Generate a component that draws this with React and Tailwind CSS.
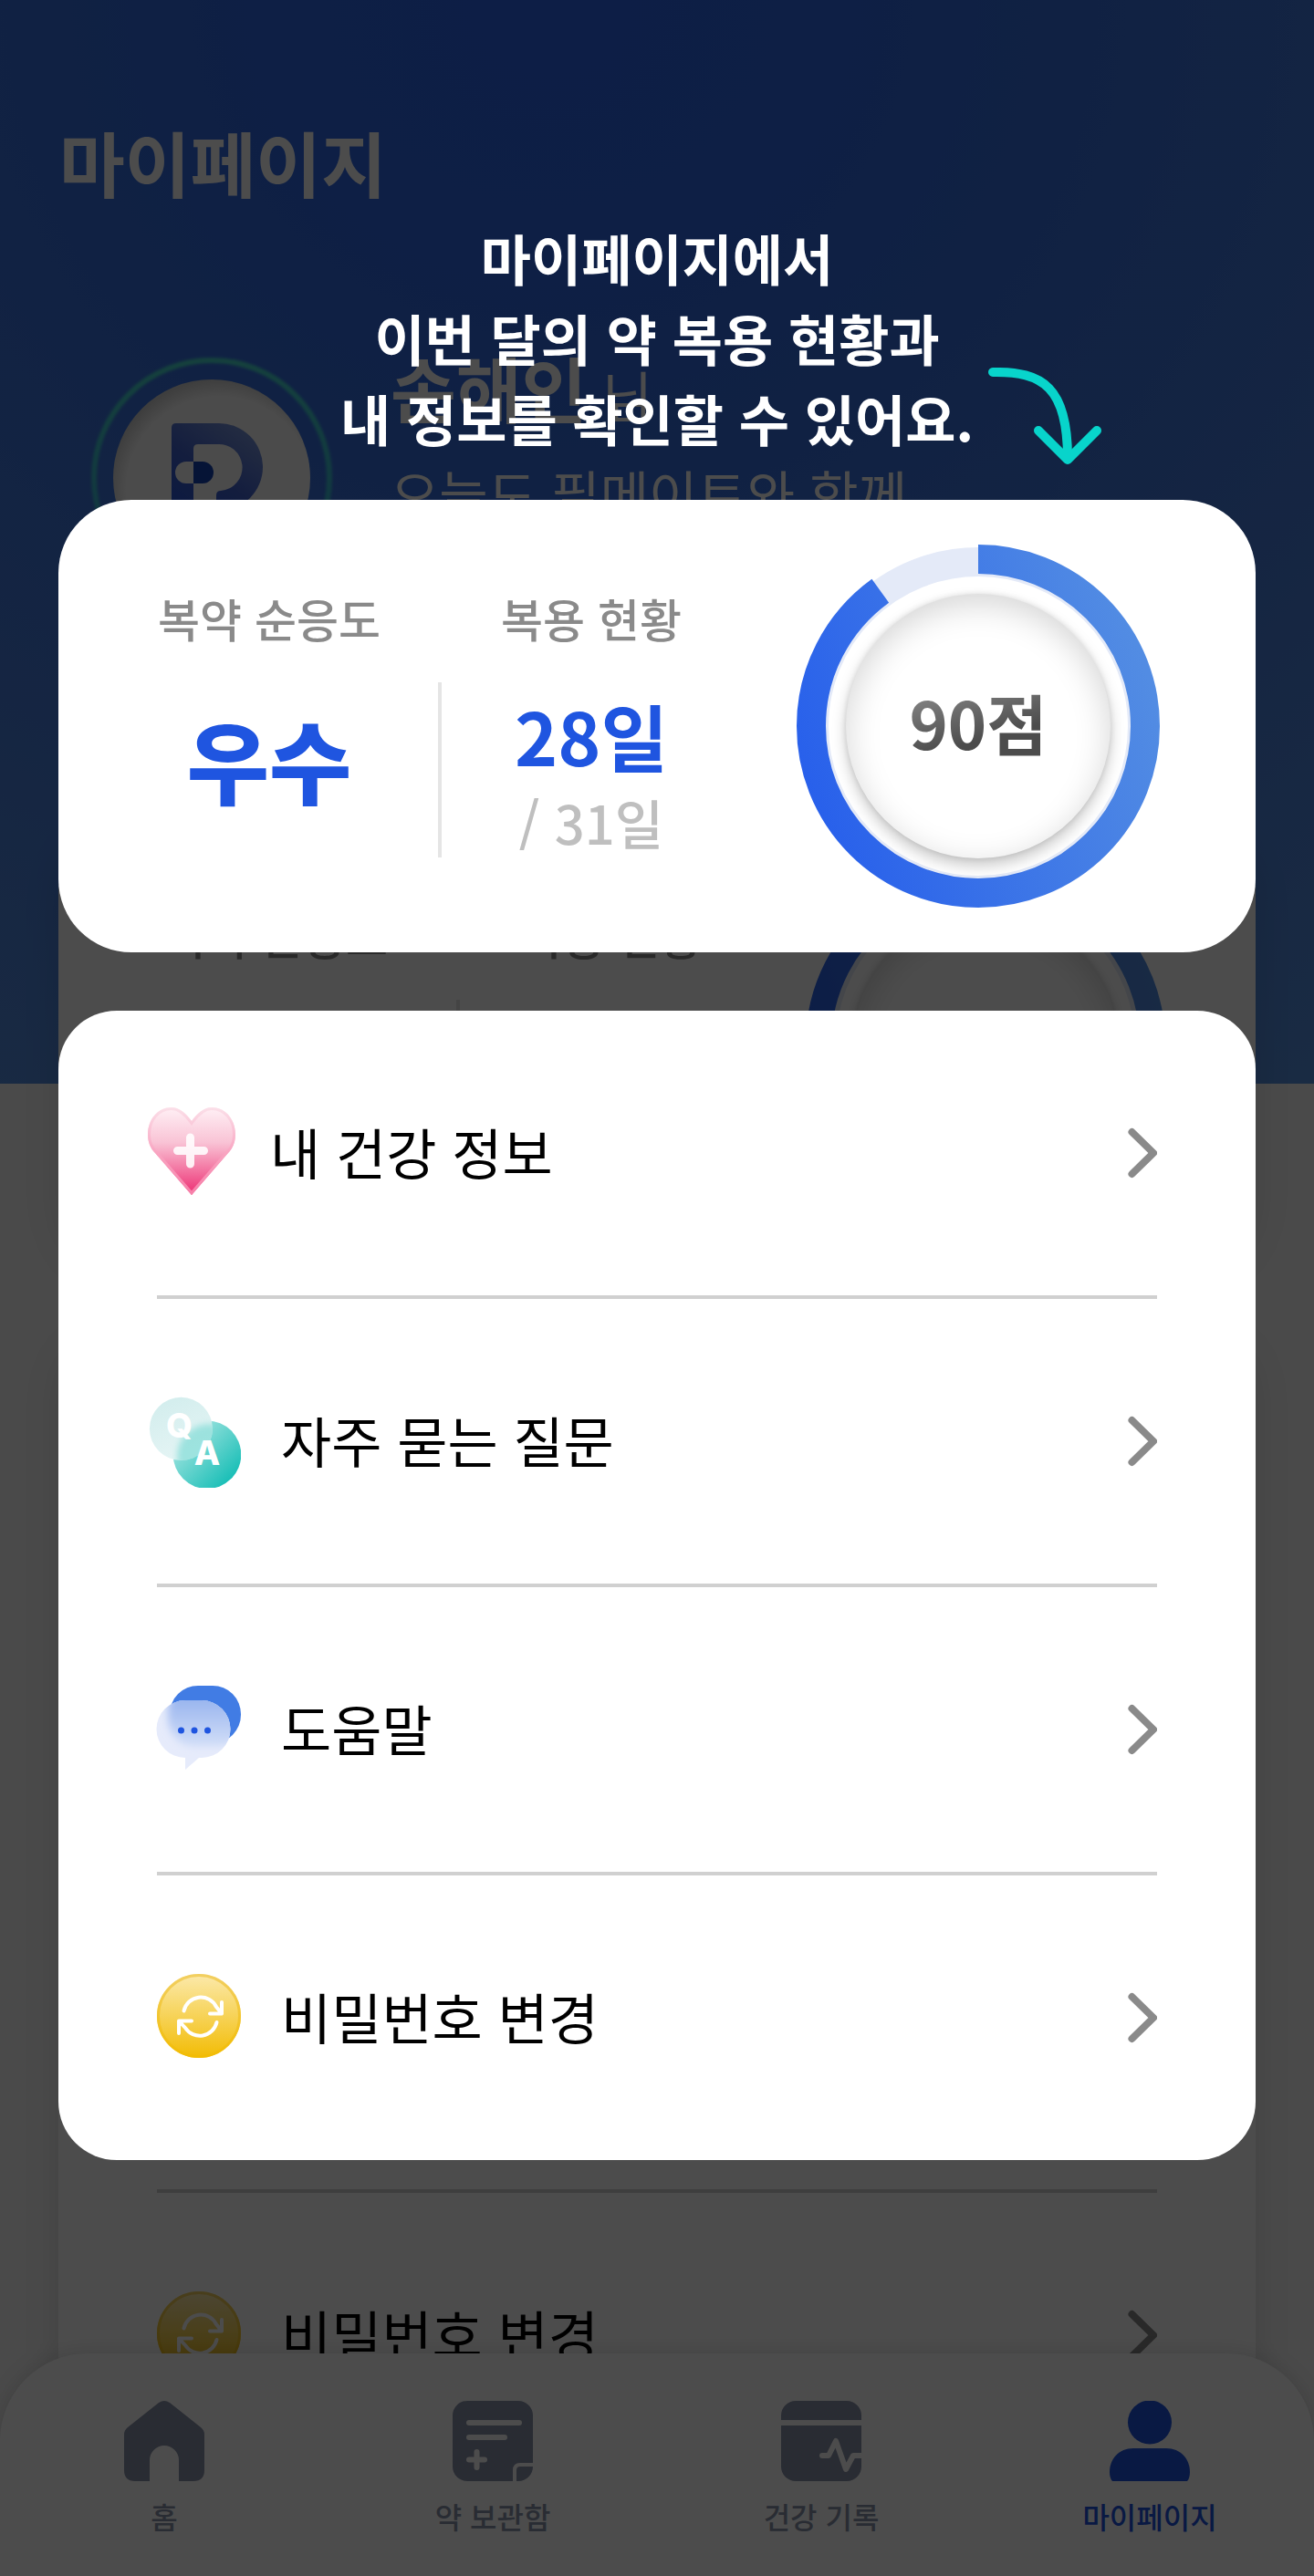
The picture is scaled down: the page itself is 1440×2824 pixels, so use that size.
import React from "react";

const TRACK = "#e4eaf8";

function ScoreRing({ progressWidth = 32, progressRadius = 183 }) {
  const id = React.useId();
  const length = 2 * Math.PI * progressRadius;
  return (
    <div className="relative grid size-[400px] shrink-0 place-items-center">
      <svg viewBox="0 0 400 400" className="absolute inset-0 size-full" aria-hidden="true">
        <defs>
          <linearGradient id={id + "g"} gradientUnits="userSpaceOnUse" x1="140" y1="10" x2="270" y2="380">
            <stop offset="0" stopColor="#2860eb" />
            <stop offset="1" stopColor="#528ce3" />
          </linearGradient>
        </defs>
        <circle cx="200" cy="200" r="180" fill="none" stroke={TRACK} strokeWidth="32" />
        <circle
          cx="200"
          cy="200"
          r={progressRadius}
          transform="rotate(-90 200 200)"
          fill="none"
          stroke={"url(#" + id + "g)"}
          strokeWidth={progressWidth}
          strokeDasharray={length * 0.9 + " " + length}
        />
      </svg>
      <div className="relative grid size-[290px] place-items-center rounded-full bg-white pb-[10px] shadow-[0_8px_16px_rgba(0,0,0,0.22),0_0_6px_rgba(0,0,0,0.10),inset_0_10px_36px_rgba(0,0,0,0.17)]">
        <strong className="bg-[linear-gradient(165deg,#808080_20%,#4c4c4c_65%)] bg-clip-text text-[72px] leading-[100px] font-bold text-transparent">
          90점
        </strong>
      </div>
    </div>
  );
}

function SummaryCard({ dimmed = false }) {
  return (
    <section
      className={
        "flex h-[496px] items-start rounded-[80px] bg-white " +
        (dimmed
          ? "pr-24 pl-[116px] shadow-[0_8px_40px_rgba(0,0,0,0.10)]"
          : "pr-[104px] pl-[108px]")
      }
    >
      <div className="flex w-[246px] flex-col items-center pt-[93px]">
        <h2 className="text-[50px] leading-[72px] font-medium whitespace-nowrap text-[#8a8a8a]">복약 순응도</h2>
        <p className="mt-[42px] text-[98px] leading-[152px] font-black whitespace-nowrap text-[#1f55e0]">우수</p>
      </div>
      <div
        className={
          "mt-[200px] h-48 w-1 shrink-0 bg-[#e5e5e5] " + (dimmed ? "mr-[66px] ml-[74px]" : "mr-16 ml-[62px]")
        }
      />
      <div className="flex w-[200px] flex-col items-center pt-[93px]">
        <h2 className="text-[50px] leading-[72px] font-medium whitespace-nowrap text-[#8a8a8a]">복용 현황</h2>
        <p className="mt-[42px] text-[80px] leading-[100px] font-bold whitespace-nowrap text-[#1f55e0]">28일</p>
        <p className="text-[58px] leading-[92px] font-medium whitespace-nowrap text-[#bfbfbf]">/ 31일</p>
      </div>
      <div className="ml-auto flex h-full items-center">
        {dimmed ? <ScoreRing progressWidth={28} /> : <ScoreRing />}
      </div>
    </section>
  );
}

function HeartIcon() {
  const id = React.useId();
  const d =
    "M48 15C42 7 35 0 26 0C11 0 0 13 0 30C0 38 3 45 8 50L48 96L88 50C93 45 96 38 96 30C96 13 85 0 70 0C61 0 54 7 48 15Z";
  return (
    <svg viewBox="0 0 90 90" className="size-[90px] shrink-0 overflow-visible" aria-hidden="true">
      <defs>
        <linearGradient id={id + "f"} x1="0" y1="0" x2="0" y2="1">
          <stop offset="0" stopColor="#fff0f5" />
          <stop offset="0.4" stopColor="#f9c3d5" />
          <stop offset="1" stopColor="#ed2d72" />
        </linearGradient>
        <linearGradient id={id + "s"} x1="0" y1="0" x2="0" y2="1">
          <stop offset="0" stopColor="#fbe0e9" />
          <stop offset="0.5" stopColor="#f9a6c2" />
          <stop offset="1" stopColor="#f77fa9" />
        </linearGradient>
        <clipPath id={id + "c"}>
          <path d={d} />
        </clipPath>
      </defs>
      <g transform="translate(0 -5)">
        <path d={d} fill={"url(#" + id + "f)"} />
        <path d={d} fill="none" stroke={"url(#" + id + "s)"} strokeWidth="6" clipPath={"url(#" + id + "c)"} />
        <path d="M46.5 33v29M32.500 47.500h29" stroke="#fff" strokeOpacity="0.88" strokeWidth="9" strokeLinecap="round" fill="none" />
      </g>
    </svg>
  );
}

function FaqIcon() {
  const id = React.useId();
  return (
    <svg viewBox="0 0 102 102" className="size-[102px] shrink-0" aria-hidden="true">
      <defs>
        <linearGradient id={id + "t"} x1="0.15" y1="0.15" x2="0.85" y2="0.85">
          <stop offset="0" stopColor="#a5e5e1" />
          <stop offset="1" stopColor="#1bbfb7" />
        </linearGradient>
        <linearGradient id={id + "l"} x1="0.2" y1="0" x2="0.6" y2="1">
          <stop offset="0" stopColor="#d2eded" />
          <stop offset="1" stopColor="#e6f5f5" />
        </linearGradient>
        <clipPath id={id + "c"}>
          <circle cx="36.400" cy="37.300" r="34.500" />
        </clipPath>
        <filter id={id + "b"} x="-20%" y="-20%" width="140%" height="140%">
          <feGaussianBlur stdDeviation="3.500" />
        </filter>
      </defs>
      <circle cx="65" cy="65.700" r="37.300" fill={"url(#" + id + "t)"} />
      <circle cx="36.400" cy="37.300" r="34.500" fill={"url(#" + id + "l)"} />
      <g clipPath={"url(#" + id + "c)"}>
        <circle cx="68" cy="68" r="36" fill="#7fdcd5" fillOpacity="0.7" filter={"url(#" + id + "b)"} />
      </g>
      <g fill="#fff" fontFamily="Inter, sans-serif" fontWeight="800" fontSize="37" textAnchor="middle">
        <text x="34.500" y="47">Q</text>
        <text x="65" y="77">A</text>
      </g>
    </svg>
  );
}

function HelpIcon() {
  const id = React.useId();
  const front = "M41 19H59A31.500 31.500 0 0 1 59 82H56L41 95V82A31.500 31.500 0 0 1 41 19Z";
  return (
    <svg viewBox="0 0 102 102" className="size-[102px] shrink-0" aria-hidden="true">
      <defs>
        <linearGradient id={id + "g"} x1="0" y1="0" x2="0" y2="1">
          <stop offset="0.2" stopColor="#95b2ee" />
          <stop offset="1" stopColor="#d3dff8" />
        </linearGradient>
        <clipPath id={id + "c"}>
          <path d={front} />
        </clipPath>
        <filter id={id + "b"} x="-20%" y="-20%" width="140%" height="140%">
          <feGaussianBlur stdDeviation="4" />
        </filter>
      </defs>
      <rect x="24" y="3" width="78" height="63" rx="31" fill="#417ce4" />
      <path d={front} fill="#e6ebfb" />
      <g clipPath={"url(#" + id + "c)"}>
        <rect x="22" y="0" width="84" height="70" rx="31" fill={"url(#" + id + "g)"} filter={"url(#" + id + "b)"} />
      </g>
      <g fill="#1f55e0">
        <circle cx="36.500" cy="52" r="3.500" />
        <circle cx="51" cy="52" r="3.500" />
        <circle cx="65.500" cy="52" r="3.500" />
      </g>
    </svg>
  );
}

function PasswordIcon() {
  const id = React.useId();
  return (
    <svg viewBox="0 0 102 102" className="size-[102px] shrink-0" aria-hidden="true">
      <defs>
        <linearGradient id={id + "f"} x1="0" y1="0" x2="0" y2="1">
          <stop offset="0.05" stopColor="#fbe7a3" />
          <stop offset="1" stopColor="#f2bc04" />
        </linearGradient>
        <linearGradient id={id + "s"} x1="0" y1="0" x2="0" y2="1">
          <stop offset="0" stopColor="#f2cf60" />
          <stop offset="1" stopColor="#f2bc04" />
        </linearGradient>
      </defs>
      <circle cx="56" cy="49" r="46" fill={"url(#" + id + "f)"} />
      <circle cx="56" cy="49" r="44.500" fill="none" stroke={"url(#" + id + "s)"} strokeWidth="3" />
      <g fill="none" stroke="#fff" strokeWidth="4" strokeLinecap="round" strokeLinejoin="round">
        <path d="M39.500 43.500A19 19 0 0 1 75 39L81 46.500M81 34V46.500H68" />
        <path d="M75.500 56A19 19 0 0 1 41 62L34 54.500M34 68V54.500H48" />
      </g>
    </svg>
  );
}

const MENU = [
  { label: "내 건강 정보", Icon: HeartIcon },
  { label: "자주 묻는 질문", Icon: FaqIcon },
  { label: "도움말", Icon: HelpIcon },
  { label: "비밀번호 변경", Icon: PasswordIcon },
];

function MenuCard({ dimmed = false }) {
  return (
    <section className={"rounded-[64px] bg-white " + (dimmed ? "shadow-[0_8px_40px_rgba(0,0,0,0.10)]" : "")}>
      <ul>
        {MENU.map(({ label, Icon }, i) => (
          <li key={label}>
            {i > 0 && <div className="mx-[108px] h-1 bg-[#d0d0d0]" />}
            <button type="button" className="flex h-[312px] w-full items-center gap-11 pr-[108px] pl-[98px] text-left">
              <Icon />
              <span className="pb-1 text-[60px] leading-[88px] whitespace-nowrap text-black">{label}</span>
              <svg viewBox="0 0 32 56" className="ml-auto h-14 w-8 shrink-0" aria-hidden="true">
                <path d="M4.500 5L28 28L4.500 51" fill="none" stroke="#8a8a8a" strokeWidth="8" strokeLinecap="round" strokeLinejoin="round" />
              </svg>
            </button>
          </li>
        ))}
      </ul>
    </section>
  );
}

function Avatar() {
  return (
    <svg viewBox="0 0 264 264" className="mt-7 size-[264px] shrink-0 overflow-visible" aria-hidden="true">
      <defs>
        <linearGradient id="avatarRing" x1="0" y1="0" x2="0" y2="1">
          <stop offset="0" stopColor="#4dfbc6" />
          <stop offset="1" stopColor="#2bc0d8" />
        </linearGradient>
        <radialGradient id="avatarFace" cx="0.54" cy="0.56" r="0.56">
          <stop offset="0.85" stopColor="#fafafa" />
          <stop offset="1" stopColor="#d0d0d0" />
        </radialGradient>
        <linearGradient id="avatarMark" x1="0.8" y1="0" x2="0.2" y2="1">
          <stop offset="0" stopColor="#7c98dc" />
          <stop offset="0.5" stopColor="#4263d0" />
          <stop offset="1" stopColor="#2452d8" />
        </linearGradient>
        <filter id="avatarBlur" x="-10%" y="-10%" width="120%" height="120%">
          <feGaussianBlur stdDeviation="1.500" />
        </filter>
      </defs>
      <circle cx="132" cy="132" r="129" fill="none" stroke="url(#avatarRing)" strokeOpacity="0.75" strokeWidth="6" filter="url(#avatarBlur)" />
      <circle cx="132" cy="132" r="108" fill="url(#avatarFace)" />
      <path
        d="M93 72H140A48 48 0 0 1 140 168V190H88V77Q88 72 93 72ZM117 95Q112 95 112 100V190H137V151Q137 146 142 146A25.500 25.500 0 0 0 138 95Z"
        fillRule="evenodd"
        fill="url(#avatarMark)"
      />
      <path d="M112 114H104A12 12 0 0 0 104 138H112Z" fill="#fafafa" />
      <path d="M112 114H122A12 12 0 0 1 122 138H112Z" fill="#1745b4" />
    </svg>
  );
}

function HomeGlyph() {
  return (
    <path
      fill="currentColor"
      d="M38 2Q44 -2 50 2L84 29Q88 32 88 37V76Q88 88 76 88H60V65A16 16 0 0 0 28 65V88H12Q0 88 0 76V37Q0 32 4 29Z"
    />
  );
}

function CabinetGlyph() {
  return (
    <>
      <rect width="88" height="88" rx="16" fill="currentColor" />
      <g fill="none" stroke="#fff" strokeLinecap="round">
        <path d="M18 24H73M18 40H57M18 64.500H35M26.500 56V73" strokeWidth="6" />
        <path d="M90 70H74Q68 70 68 76V90" strokeWidth="4" />
      </g>
    </>
  );
}

function RecordGlyph() {
  return (
    <>
      <rect width="88" height="88" rx="16" fill="currentColor" />
      <g fill="none" stroke="#fff" strokeLinecap="round" strokeLinejoin="round">
        <path d="M-4 24H92" strokeWidth="6" />
        <path d="M45 60H52L60 44L71 75L79 60H92" strokeWidth="6" />
      </g>
    </>
  );
}

function PersonGlyph() {
  return (
    <g fill="currentColor">
      <circle cx="44" cy="23.500" r="24" />
      <path d="M26 52H62C78 52 88 64 88 78C88 82 87 86 85 88H3C1 86 0 82 0 78C0 64 10 52 26 52Z" />
    </g>
  );
}

const TABS = [
  { label: "홈", Glyph: HomeGlyph },
  { label: "약 보관함", Glyph: CabinetGlyph },
  { label: "건강 기록", Glyph: RecordGlyph },
  { label: "마이페이지", Glyph: PersonGlyph, active: true },
];

function TabBar() {
  return (
    <nav className="relative -mt-[136px] grid grid-cols-4 rounded-t-[96px] bg-white pt-[52px] pb-[46px] shadow-[0_0_24px_rgba(0,0,0,0.14)]">
      {TABS.map(({ label, Glyph, active }) => (
        <a
          key={label}
          href="#"
          aria-current={active ? "page" : undefined}
          className={"flex flex-col items-center gap-[18px] " + (active ? "text-[#1f55e0]" : "text-[#8a93aa]")}
        >
          <svg viewBox="0 0 88 88" className="size-[88px]" aria-hidden="true">
            <Glyph />
          </svg>
          <span className="text-[32px] leading-10 font-medium">{label}</span>
        </a>
      ))}
    </nav>
  );
}

function MyPage() {
  return (
    <div className="flex flex-col bg-[#f7f7f7] [grid-area:1/1]" inert>
      <header className="bg-[radial-gradient(ellipse_1500px_1400px_at_42%_0%,#2c66ea_0%,#3069e6_22%,#3972df_42%,#4a80de_72%,#558fdf_100%)] px-[65px] pt-[129px] pb-[532px]">
        <h1 className="text-[78px] leading-24 font-bold text-white">마이페이지</h1>
        <div className="mt-[139px] flex h-[292px] items-start gap-16 px-[35px]">
          <Avatar />
          <div className="text-white">
            <p className="text-[60px] leading-[120px]">
              <strong className="text-[78px] font-bold">손해인</strong> 님
            </p>
            <p className="pt-1 text-[58px] leading-[88px] whitespace-nowrap">오늘도 필메이트와 함께</p>
          </div>
        </div>
      </header>
      <main className="-mt-[292px] flex flex-col gap-16 px-16">
        <SummaryCard dimmed />
        <MenuCard dimmed />
      </main>
      <TabBar />
    </div>
  );
}

function Guide() {
  return (
    <div className="z-10 flex flex-col bg-black/70 px-16 pt-[238px] [grid-area:1/1]" role="dialog" aria-label="마이페이지 안내">
      <div className="grid grid-cols-[1fr_auto_1fr]">
        <p className="col-start-2 text-center text-[60px] leading-[88px] font-semibold whitespace-nowrap text-white">
          마이페이지에서
          <br />
          이번 달의 약 복용 현황과
          <br />내 정보를 확인할 수 있어요.
        </p>
        <svg viewBox="0 0 124 106" className="mt-[165px] ml-4 h-[106px] w-[124px]" aria-hidden="true">
          <g fill="none" stroke="#08d4cb" strokeWidth="10" strokeLinecap="round" strokeLinejoin="round">
            <path d="M5 5C60 4 87 22 87 99" />
            <path d="M55 69L87 101L119 69" />
          </g>
        </svg>
      </div>
      <div className="mt-[39px] flex flex-col gap-16">
        <SummaryCard />
        <MenuCard />
      </div>
    </div>
  );
}

export default function App() {
  return (
    <div className="grid min-h-screen font-['Noto_Sans_CJK_KR',sans-serif]" lang="ko">
      <MyPage />
      <Guide />
    </div>
  );
}
